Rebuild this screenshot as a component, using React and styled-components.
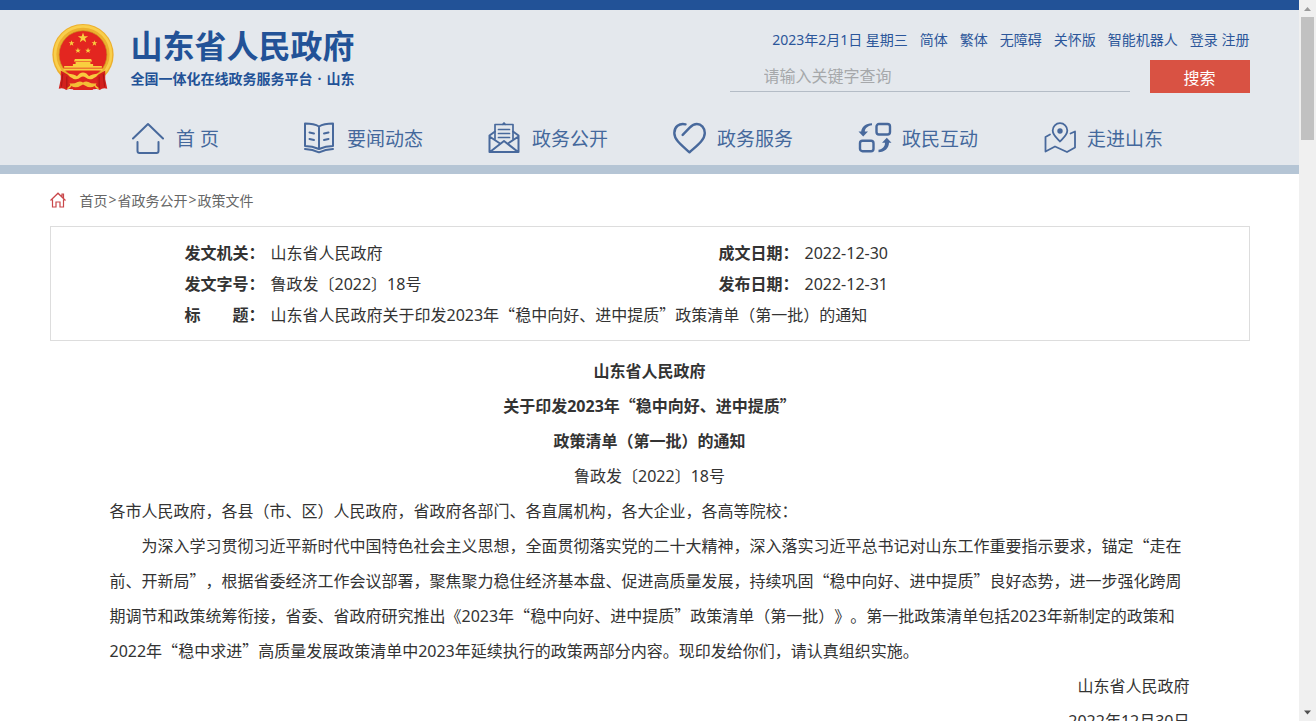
import React from "react"
import styled, { createGlobalStyle } from "styled-components"

const GlobalStyle = createGlobalStyle`
  * {
    box-sizing: border-box;
  }
  body {
    margin: 0;
    background-color: #fff;
    color: #333;
    font-family: "Noto Sans", "Noto Sans CJK SC", sans-serif;
    font-size: 16px;
    text-spacing-trim: space-all;
  }
  a {
    color: inherit;
    text-decoration: none;
  }
`

const Window = styled.div`
  display: flex;
  height: 100vh;
`

const Page = styled.div`
  flex: 1;
  min-width: 0;
  overflow: hidden;
`

const Container = styled.div`
  max-width: 1200px;
  margin: 0 auto;
`

const Header = styled.header`
  background-color: #e4e8ed;
  border-top: 10px solid #225297;
  border-bottom: 9px solid #b5c5d5;
`

const HeaderTop = styled.div`
  display: flex;
  justify-content: space-between;
  height: 100px;
  padding-top: 14px;
`

const Brand = styled.a`
  display: flex;
  gap: 17px;
  padding-left: 2px;
  color: #225297;
  font-weight: 700;
`

const SiteName = styled.div`
  font-size: 32px;
  line-height: 44px;
`

const Slogan = styled.div`
  font-size: 14px;
  line-height: 22px;
`

const Dot = styled.span`
  margin: 0 5px;
`

const Tools = styled.div`
  width: 520px;
`

const TopLinks = styled.div`
  display: flex;
  justify-content: flex-end;
  gap: 12px;
  color: #2b569a;
  font-size: 14px;
  line-height: 32px;
`

const SearchForm = styled.form`
  display: flex;
  justify-content: space-between;
  margin-top: 4px;
`

const SearchInput = styled.input`
  width: 400px;
  height: 32px;
  padding: 0 34px;
  border: 0;
  border-bottom: 1px solid #b4bcc6;
  background: transparent;
  font: inherit;
  outline: none;
  &::placeholder {
    color: #a6a8ab;
    opacity: 1;
  }
`

const SearchButton = styled.button`
  width: 100px;
  height: 33px;
  border: 0;
  background-color: #d95243;
  color: #fff;
  font: inherit;
`

const Nav = styled.nav`
  display: flex;
  height: 55px;
  padding-left: 31px;
`

const NavItem = styled.a`
  display: flex;
  flex: 0 1 185px;
  align-items: center;
  justify-content: center;
  gap: 10px;
  color: #44689c;
  font-size: 19px;
  white-space: nowrap;
  &:first-child {
    flex-basis: 190px;
  }
`

const Crumbs = styled.div`
  display: flex;
  align-items: center;
  height: 52px;
  color: #666;
  font-size: 14px;
`

const CrumbLinks = styled.span`
  display: flex;
  gap: 1px;
  margin-left: 14px;
`

const InfoBox = styled.section`
  padding: 11px 134px 9px;
  border: 1px solid #ddd;
`

const InfoTable = styled.table`
  width: 100%;
  border-collapse: collapse;
  table-layout: fixed;
  line-height: 31px;
  th,
  td {
    padding: 0;
    text-align: left;
  }
`

const LabelCol = styled.col`
  width: 86px;
`

const ValueCol = styled.col`
  width: 448px;
`

const Article = styled.article`
  margin-top: 13px;
  padding: 0 60px;
  line-height: 35px;
`

const Title = styled.h1`
  margin: 0;
  font-size: 16px;
  text-align: center;
`

const Paragraph = styled.p`
  margin: 0;
  text-align: ${({ $align }) => $align || "left"};
  text-indent: ${({ $indent }) => ($indent ? "2em" : "0")};
`

// Chinese quotation marks take a full square
const Wide = styled.span`
  font-family: "Noto Sans CJK SC", sans-serif;
  line-height: 1;
`

const ScrollBar = styled.div`
  display: flex;
  flex-direction: column;
  align-items: center;
  justify-content: space-between;
  width: 17px;
  background-color: #f0f0f0;
`

const ScrollThumb = styled.div`
  width: 13px;
  height: 123px;
  margin-bottom: auto;
  background-color: #c1c1c1;
`

const Arrow = styled.svg`
  display: block;
`

const quoted = (text) =>
  text
    .split(/([“”])/)
    .map((part, i) => (/[“”]/.test(part) ? <Wide key={i}>{part}</Wide> : part))

const NavIcon = ({ children, width = 2 }) => (
  <svg
    width="34"
    height="32"
    viewBox="0 0 34 32"
    fill="none"
    stroke="#48699c"
    strokeWidth={width}
    strokeLinecap="round"
    strokeLinejoin="round"
    aria-hidden="true"
  >
    {children}
  </svg>
)

const HomeIcon = () => (
  <NavIcon>
    <path d="M1 16.500 16 2l15 14.500M5.500 20v9a2 2 0 0 0 2 2h17a2 2 0 0 0 2-2V20" />
  </NavIcon>
)

const BookIcon = () => (
  <NavIcon>
    <path d="M16 4.500C12 2 7.500 1.500 2 1.500v22.500c5.500 0 9.500 1 14 3 4.500-2 8.500-3 14-3V1.500C24.500 1.500 20 2 16 4.500zM16 4.500V26" />
    <path d="M2 27c5.500.2 9.500 1.200 14 3.300 4.500-2.100 8.500-3.100 14-3.300M6.500 10.500l4.500 1M6.500 17l4.500 1M25.500 10.500l-4.500 1M25.500 17l-4.500 1" />
  </NavIcon>
)

const MailIcon = () => (
  <NavIcon>
    <path d="M7 17V2.500h18V17M14.500 2.500 16 1l1.500 1.500M10.500 7.500h11M10.500 11.500h11M10.500 15.500h11" strokeWidth="1.700" />
    <path d="M7 9.500 1.500 13.500v16.500h29V13.500L25 9.500M1.500 14.500l10.500 7M30.500 14.500l-10.500 7M2.500 29.500 16 19l13.500 10.500" />
  </NavIcon>
)

const HeartIcon = () => (
  <NavIcon width={2.4}>
    <path d="M12.500 2.300C6.200.7 1.300 5 1.300 11c0 7 7.500 12.500 15.200 19.300C24.200 23.500 31.800 18 31.800 11c0-5-3.500-9-7.900-9-3.100 0-5.100 1.500-7.200 3.700l-7 7.200" />
  </NavIcon>
)

const SwapIcon = () => (
  <NavIcon width={2.4}>
    <rect x="18.500" y="2" width="13.500" height="10.500" rx="2.500" />
    <rect x="2" y="18.700" width="13.500" height="10.500" rx="2.500" />
    <path
      d="M14 1.200C7.500 1.500 3.500 5 3.200 9.500H.5l4.700 5 4.800-5H6.800C7 6 9.500 4 14 3.200zM20.500 30.300c6.500-.3 10.300-4 10.500-9.500h2.500l-4.700-5-4.800 5H27c0 4-2.500 6.500-6.500 7z"
      fill="#48699c"
      stroke="none"
    />
  </NavIcon>
)

const MapIcon = () => (
  <NavIcon width={1.8}>
    <path d="M17 19.500c-3.500-3.800-7.300-6.500-7.300-11a7.300 7.300 0 0 1 14.600 0c0 4.500-3.800 7.200-7.300 11z" />
    <circle cx="17" cy="9" r="1.800" fill="#48699c" />
    <path d="M7 12.500 2.500 15v14.500l9.500-5 12 5.500 8-4.500V9.500l-4.500 2" />
  </NavIcon>
)

const CrumbHome = () => (
  <svg
    width="16"
    height="16"
    viewBox="0 0 16 16"
    fill="none"
    stroke="#c9474a"
    strokeWidth="1.200"
    aria-hidden="true"
  >
    <path d="M.5 8.500 8 1.200l7.500 7.300M12 4.800V2h1.500v4.300M2.500 7.500v7.500H6v-5h4v5h3.500V7.500" />
  </svg>
)

const STAR = "M0-10 2.400-3.100 9.500-3.100 3.800 1.200 5.900 8.100 0 4-5.900 8.100-3.800 1.200-9.500-3.100-2.400-3.100z"

const Emblem = () => (
  <svg width="62" height="66" viewBox="0 0 184 196" role="img" aria-label="国徽">
    <circle cx="92" cy="91" r="91" fill="#edb02e" />
    <circle cx="92" cy="90" r="83" fill="none" stroke="#f9cf4c" strokeWidth="8" />
    <circle cx="92" cy="91" r="71" fill="#e32620" stroke="#c98d20" strokeWidth="2" />
    <g fill="#f9cf3f">
      <path d={STAR} transform="translate(92 41) scale(1.600)" />
      <path d={STAR} transform="translate(58 57) scale(.9)" />
      <path d={STAR} transform="translate(126 57) scale(.9)" />
      <path d={STAR} transform="translate(77 79) scale(.9)" />
      <path d={STAR} transform="translate(107 79) scale(.9)" />
      <path d="M68 104h48l3 7H65zM70 113h44v6H70zM62 119h60v11H62zM36 125h112v5H36zM34 132h116v6H34z" />
    </g>
    <path d="M26 138 46 150 58 162 60 194q-12-2-18 2-8-8-22-4l6-28zM158 138l-20 12-12 12-2 32q12-2 18 2 8-8 22-4l-6-28z" fill="#d3201d" />
    <path d="m32 148-4 38M44 156v34M152 148l4 38M140 156v34" stroke="#a81715" strokeWidth="3" />
    <path d="M52 158h80l4 24q-8 10-16 14H64q-8-4-16-14z" fill="#dc241f" />
    <path d="M46 147q20 2 28 8l8-8q10-6 20 0l8 8q8-6 28-8-8 12-18 16-12 4-20-4-8-6-16 0-8 8-20 4-10-4-18-16z" fill="#f8c93e" />
    <path d="M52 176q14 2 24-4 8-4 16 2 8-6 16-2 10 6 24 4-4 12-18 12-10 0-22-8-12 8-22 8-14 0-18-12z" fill="#f3bd36" />
    <path d="M58 180q-4 8-12 12M126 180q4 8 12 12" fill="none" stroke="#f3bd36" strokeWidth="4" />
  </svg>
)

const topLinks = ["简体", "繁体", "无障碍", "关怀版", "智能机器人"]

const navItems = [
  { label: "首 页", Icon: HomeIcon },
  { label: "要闻动态", Icon: BookIcon },
  { label: "政务公开", Icon: MailIcon },
  { label: "政务服务", Icon: HeartIcon },
  { label: "政民互动", Icon: SwapIcon },
  { label: "走进山东", Icon: MapIcon },
]

const App = () => {
  return (
    <Window lang="zh-CN">
      <GlobalStyle />
      <Page>
        <Header>
          <Container>
            <HeaderTop>
              <Brand href="#">
                <Emblem />
                <div>
                  <SiteName>山东省人民政府</SiteName>
                  <Slogan>
                    全国一体化在线政务服务平台<Dot>·</Dot>山东
                  </Slogan>
                </div>
              </Brand>
              <Tools>
                <TopLinks>
                  <span>2023年2月1日 星期三</span>
                  {topLinks.map((label) => (
                    <a href="#" key={label}>
                      {label}
                    </a>
                  ))}
                  <span>
                    <a href="#">登录</a> <a href="#">注册</a>
                  </span>
                </TopLinks>
                <SearchForm>
                  <SearchInput
                    type="text"
                    aria-label="搜索"
                    placeholder="请输入关键字查询"
                  />
                  <SearchButton type="button">搜索</SearchButton>
                </SearchForm>
              </Tools>
            </HeaderTop>
            <Nav>
              {navItems.map(({ label, Icon }) => (
                <NavItem href="#" key={label}>
                  <Icon />
                  {label}
                </NavItem>
              ))}
            </Nav>
          </Container>
        </Header>
        <Container as="main">
          <Crumbs>
            <CrumbHome />
            <CrumbLinks>
              <a href="#">首页</a>
              <span>&gt;</span>
              <a href="#">省政务公开</a>
              <span>&gt;</span>
              <a href="#">政策文件</a>
            </CrumbLinks>
          </Crumbs>
          <InfoBox>
            <InfoTable>
              <colgroup>
                <LabelCol />
                <ValueCol />
                <LabelCol />
                <col />
              </colgroup>
              <tbody>
                <tr>
                  <th scope="row">发文机关：</th>
                  <td>山东省人民政府</td>
                  <th scope="row">成文日期：</th>
                  <td>2022-12-30</td>
                </tr>
                <tr>
                  <th scope="row">发文字号：</th>
                  <td>鲁政发〔2022〕18号</td>
                  <th scope="row">发布日期：</th>
                  <td>2022-12-31</td>
                </tr>
                <tr>
                  <th scope="row">标　　题：</th>
                  <td colSpan={3}>
                    {quoted(
                      "山东省人民政府关于印发2023年“稳中向好、进中提质”政策清单（第一批）的通知"
                    )}
                  </td>
                </tr>
              </tbody>
            </InfoTable>
          </InfoBox>
          <Article>
            <Title>
              山东省人民政府
              <br />
              {quoted("关于印发2023年“稳中向好、进中提质”")}
              <br />
              政策清单（第一批）的通知
            </Title>
            <Paragraph $align="center">鲁政发〔2022〕18号</Paragraph>
            <Paragraph>
              各市人民政府，各县（市、区）人民政府，省政府各部门、各直属机构，各大企业，各高等院校：
            </Paragraph>
            <Paragraph $indent>
              {quoted(
                "为深入学习贯彻习近平新时代中国特色社会主义思想，全面贯彻落实党的二十大精神，深入落实习近平总书记对山东工作重要指示要求，锚定“走在前、开新局”，根据省委经济工作会议部署，聚焦聚力稳住经济基本盘、促进高质量发展，持续巩固“稳中向好、进中提质”良好态势，进一步强化跨周期调节和政策统筹衔接，省委、省政府研究推出《2023年“稳中向好、进中提质”政策清单（第一批）》。第一批政策清单包括2023年新制定的政策和2022年“稳中求进”高质量发展政策清单中2023年延续执行的政策两部分内容。现印发给你们，请认真组织实施。"
              )}
            </Paragraph>
            <Paragraph $align="right">山东省人民政府</Paragraph>
            <Paragraph $align="right">2022年12月30日</Paragraph>
          </Article>
        </Container>
      </Page>
      <ScrollBar aria-hidden="true">
        <Arrow width="17" height="17" viewBox="0 0 17 17">
          <path d="M5 11h7L8.500 7z" fill="#9a9a9a" />
        </Arrow>
        <ScrollThumb />
        <Arrow width="17" height="17" viewBox="0 0 17 17">
          <path d="M5 6.500h7l-3.500 4z" fill="#505050" />
        </Arrow>
      </ScrollBar>
    </Window>
  )
}

export default App
